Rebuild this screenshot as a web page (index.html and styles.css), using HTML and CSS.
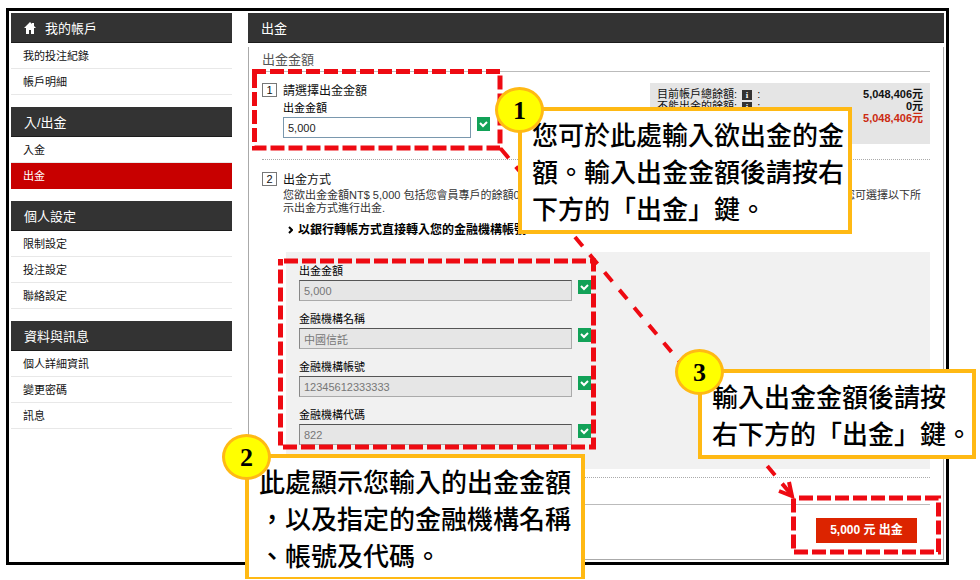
FILE: index.html
```html
<!DOCTYPE html>
<html lang="zh-Hant">
<head>
    <meta charset="UTF-8">
    <meta name="viewport" content="width=device-width, initial-scale=1.0">
    <title>出金</title>
    <link rel="stylesheet" href="styles.css">
</head>
<body>
    <div class="frame">
        <nav class="sidebar">
            <section class="menu">
                <h2>
                    <svg class="home" viewBox="0 0 12 12"><path d="M6 0L0 6h2v6h3V8h2v4h3V6h2L10 4V1H8v1z" fill="#fff"/></svg>
                    我的帳戶
                </h2>
                <a href="#">我的投注紀錄</a>
                <a href="#">帳戶明細</a>
            </section>
            <section class="menu">
                <h2>入/出金</h2>
                <a href="#">入金</a>
                <a href="#" class="active">出金</a>
            </section>
            <section class="menu">
                <h2>個人設定</h2>
                <a href="#">限制設定</a>
                <a href="#">投注設定</a>
                <a href="#">聯絡設定</a>
            </section>
            <section class="menu">
                <h2>資料與訊息</h2>
                <a href="#">個人詳細資訊</a>
                <a href="#">變更密碼</a>
                <a href="#">訊息</a>
            </section>
        </nav>

        <main class="main">
            <h1>出金</h1>
            <form class="content">
                <h3 class="section-title">出金金額</h3>

                <div class="step step-amount">
                    <span class="num">1</span>
                    <div class="step-body">
                        <h4>請選擇出金金額</h4>
                        <div class="field">
                            <label for="amount">出金金額</label>
                            <div class="control">
                                <input type="text" id="amount" value="5,000">
                                <svg class="check" viewBox="0 0 13 14"><path d="M3 6l3 3 4-4" fill="none" stroke="#fff" stroke-width="2"/></svg>
                            </div>
                        </div>
                    </div>
                    <dl class="summary">
                        <div><dt>目前帳戶總餘額: <i class="info">i</i> :</dt><dd>5,048,406元</dd></div>
                        <div><dt>不能出金的餘額: <i class="info">i</i> :</dt><dd>0元</dd></div>
                        <div class="total"><dt></dt><dd>5,048,406元</dd></div>
                    </dl>
                </div>

                <div class="step step-method">
                    <span class="num">2</span>
                    <div class="step-body">
                        <h4>出金方式</h4>
                        <p class="note">
                            <span>您欲出金金額NT$ 5,000 包括您會員專戶的餘額0</span>
                            <span>您可選擇以下所</span>
                        </p>
                        <p class="note">示出金方式進行出金.</p>
                        <a href="#" class="method">
                            <svg class="arrow" viewBox="0 0 5 8"><path d="M1 1l3 3-3 3" fill="none" stroke="#000" stroke-width="2"/></svg>
                            以銀行轉帳方式直接轉入您的金融機構帳號
                        </a>
                        <div class="bank">
                            <div class="field">
                                <label for="bankAmount">出金金額</label>
                                <div class="control">
                                    <input type="text" id="bankAmount" value="5,000" disabled>
                                    <svg class="check" viewBox="0 0 13 14"><path d="M3 6l3 3 4-4" fill="none" stroke="#fff" stroke-width="2"/></svg>
                                </div>
                            </div>
                            <div class="field">
                                <label for="bankName">金融機構名稱</label>
                                <div class="control">
                                    <input type="text" id="bankName" value="中國信託" disabled>
                                    <svg class="check" viewBox="0 0 13 14"><path d="M3 6l3 3 4-4" fill="none" stroke="#fff" stroke-width="2"/></svg>
                                </div>
                            </div>
                            <div class="field">
                                <label for="bankAccount">金融機構帳號</label>
                                <div class="control">
                                    <input type="text" id="bankAccount" value="12345612333333" disabled>
                                    <svg class="check" viewBox="0 0 13 14"><path d="M3 6l3 3 4-4" fill="none" stroke="#fff" stroke-width="2"/></svg>
                                </div>
                            </div>
                            <div class="field">
                                <label for="bankCode">金融機構代碼</label>
                                <div class="control">
                                    <input type="text" id="bankCode" value="822" disabled>
                                    <svg class="check" viewBox="0 0 13 14"><path d="M3 6l3 3 4-4" fill="none" stroke="#fff" stroke-width="2"/></svg>
                                </div>
                            </div>
                        </div>
                    </div>
                </div>

                <div class="actions">
                    <button type="submit">5,000 元 出金</button>
                </div>
            </form>
        </main>
    </div>

    <!-- Guide drawn over the form -->
    <div class="guide">
        <svg class="marks" width="980" height="580" viewBox="0 0 980 580">
            <g fill="none" stroke="#ee0a12">
                <g stroke-width="5" stroke-dasharray="14 4">
                    <path d="M252 71.500H500V148H254.500V69"/>
                    <path d="M284 261H593.500V447H280.500V259"/>
                    <path d="M799 498H938.500V552H793.500V496"/>
                </g>
                <path d="M501 149L790 493" stroke-width="4" stroke-dasharray="12 11"/>
                <path d="M779 491l13 5-3-14" stroke-width="4"/>
            </g>
        </svg>
        <div class="callout callout-1">
            <span class="badge">1</span>
            您可於此處輸入欲出金的金<br>額。輸入出金金額後請按右<br>下方的「出金」鍵。
        </div>
        <div class="callout callout-2">
            <span class="badge">2</span>
            此處顯示您輸入的出金金額<br>，以及指定的金融機構名稱<br>、帳號及代碼。
        </div>
        <div class="callout callout-3">
            <span class="badge">3</span>
            輸入出金金額後請按<br>右下方的「出金」鍵。
        </div>
    </div>
</body>
</html>
```

FILE: styles.css
```css
* {
    box-sizing: border-box;
}

body {
    position: relative;
    margin: 0;
    padding: 8px 31px 14px 6px;
    background: #fff;
    color: #111;
    font-family: "Liberation Sans", "Noto Sans CJK TC", sans-serif;
    font-size: 11px;
    line-height: 13px;
}

h1, h2, h3, h4, p, dl, dd {
    margin: 0;
    font-weight: normal;
}

a {
    color: inherit;
    text-decoration: none;
}

.frame {
    display: flex;
    gap: 16px;
    padding: 2px;
    border: 3px solid #000;
}

/* Sidebar */
.sidebar {
    flex: 0 0 221px;
    display: flex;
    flex-direction: column;
    gap: 12px;
}

.menu h2, .main h1 {
    display: flex;
    align-items: center;
    height: 30px;
    padding: 1px 13px 0;
    background: #333;
    border-bottom: 1px solid #1c1c1c;
    color: #fff;
    font-size: 13px;
}

.home {
    width: 12px;
    height: 12px;
    margin-right: 9px;
}

.menu a {
    display: block;
    height: 26px;
    padding: 0 12px;
    border-bottom: 1px solid #e8e8e8;
    line-height: 27px;
}

.menu a.active {
    background: #c80000;
    border-color: #c80000;
    color: #fff;
}

/* Main column */
.main {
    flex: 1;
    display: flex;
    flex-direction: column;
    gap: 4px;
}

.content {
    padding: 4px 13px 16px 13px;
    border: 1px solid #aaa;
    border-top: none;
}

.section-title {
    height: 21px;
    border-bottom: 1px solid #bbb;
    color: #555;
    font-size: 13px;
    line-height: 18px;
}

.step {
    display: flex;
    align-items: flex-start;
    border-bottom: 1px dotted #aaa;
}

.step-amount {
    height: 88px;
    padding-top: 11px;
}

.step-method {
    padding: 12px 0 8px;
}

.num {
    width: 15px;
    height: 14px;
    margin-right: 6px;
    border: 1px solid #777;
    font-size: 11px;
    line-height: 12px;
    text-align: center;
}

.step-body {
    flex: 1;
}

.step h4 {
    margin-bottom: 1px;
    font-size: 12px;
    line-height: 16px;
}

.field label {
    display: block;
    height: 17px;
    line-height: 17px;
    color: #000;
}

.control {
    display: flex;
    align-items: flex-start;
    gap: 6px;
}

.field input {
    width: 188px;
    height: 21px;
    padding: 0 4px;
    border: 1px solid #7a98ae;
    color: #222;
    font: inherit;
}

.check {
    width: 13px;
    height: 14px;
    background: #12a258;
}

.summary {
    width: 280px;
    height: 61px;
    padding: 5px 7px;
    background: #e5e5e5;
}

.summary div {
    display: flex;
    justify-content: space-between;
    height: 12px;
    line-height: 12px;
}

.summary dd {
    font-weight: bold;
}

.total dd {
    color: #cc2b12;
}

.info {
    display: inline-block;
    width: 10px;
    height: 10px;
    margin: 0 2px;
    background: #333;
    color: #fff;
    font: bold 9px/10px "Liberation Serif", serif;
    text-align: center;
}

.note {
    display: flex;
    justify-content: space-between;
    padding-right: 9px;
    color: #333;
}

.method {
    display: flex;
    align-items: center;
    gap: 5px;
    margin: 8px 0 15px;
    padding-left: 5px;
    color: #000;
    font-size: 12px;
    font-weight: bold;
    line-height: 14px;
}

.arrow {
    width: 5px;
    height: 8px;
}

.bank {
    display: flex;
    flex-direction: column;
    gap: 10px;
    margin-left: 3px;
    padding: 11px 13px 24px;
    background: #f1f1f1;
}

.bank input {
    width: 273px;
    border-color: #555 #aaa #aaa #888;
    background: #e6e6e6;
    color: #777;
}

.actions {
    display: flex;
    justify-content: flex-end;
    margin-top: 26px;
    padding: 13px 13px 0;
    border-top: 1px solid #bbb;
}

.actions button {
    width: 101px;
    height: 25px;
    padding: 0;
    border: none;
    background: #dc2400;
    color: #fff;
    font: inherit;
    font-size: 12px;
    font-weight: bold;
    cursor: pointer;
}

/* Guide */
.guide {
    position: absolute;
    inset: 0;
    overflow: hidden;
    pointer-events: none;
}

.marks {
    position: absolute;
    top: 0;
    left: 0;
}

.callout {
    position: absolute;
    padding: 4px 10px;
    border: 4px solid #ffb914;
    background: #fff;
    color: #000;
    font-family: "AR PL UKai TW", "DFKai-SB", "Noto Sans CJK TC", serif;
    font-size: 26px;
    font-weight: 500;
    line-height: 37px;
    white-space: nowrap;
}

.callout-1 {
    left: 518px;
    top: 107px;
    padding-right: 4px;
}

.callout-2 {
    left: 245px;
    top: 454px;
}

.callout-3 {
    left: 698px;
    top: 369px;
    padding-right: 0;
}

.badge {
    position: absolute;
    left: -27px;
    top: -24px;
    width: 49px;
    height: 46px;
    border: 3px solid #ffb914;
    border-radius: 50%;
    background: #ff0;
    font-family: "Liberation Serif", serif;
    font-size: 26px;
    font-weight: bold;
    line-height: 42px;
    text-align: center;
}
```
